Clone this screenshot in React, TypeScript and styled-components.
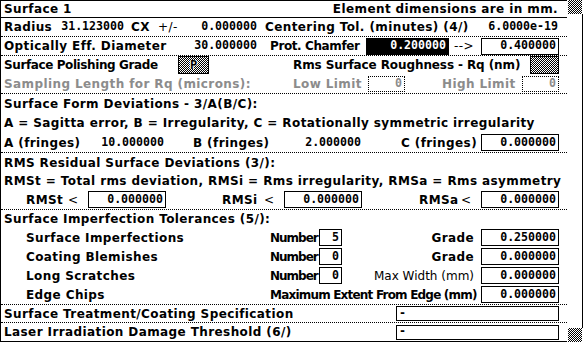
import React from 'react';
import styled, { createGlobalStyle, css } from 'styled-components';

const GlobalStyle = createGlobalStyle`
  * {
    margin: 0;
    padding: 0;
    box-sizing: border-box;
  }
  html, body {
    background: #fff;
  }
  body {
    font-family: 'DejaVu Sans', sans-serif;
    font-weight: bold;
    font-size: 12px;
    letter-spacing: 0.4px;
    color: #000;
  }
`;

// 1px black/white checker, the old X11 "gray" stipple
const stipple = css`
  background-color: #fff;
  background-image: repeating-conic-gradient(#000 0 25%, #fff 0 50%);
  background-size: 2px 2px;
`;

const mono = css`
  font-family: 'DejaVu Sans Mono', monospace;
  font-size: 11.6px;
  letter-spacing: 0;
`;

const Window = styled.div`
  display: flex;
  width: 583px;
  height: 342px;
`;

const Panel = styled.div`
  width: 567px;
  height: 342px;
  flex: none;
  border: 1px solid #000;
  border-right: none;
  display: flex;
  flex-direction: column;
`;

const Section = styled.div<{ $h: number; $solid?: boolean; $last?: boolean }>`
  height: ${p => p.$h}px;
  flex: none;
  display: flex;
  flex-direction: column;
  border-bottom: ${p => (p.$last ? 'none' : p.$solid ? '1px solid #000' : '1px dotted #000')};
`;

const Row = styled.div<{ $h: number }>`
  height: ${p => p.$h}px;
  flex: none;
  display: flex;
  align-items: center;
  padding: 0 8px 0 3px;
  white-space: pre;
  line-height: 1;
`;

const Cell = styled.span<{
  $w?: number;
  $ml?: number;
  $right?: boolean;
  $dim?: boolean;
  $thin?: boolean;
  $pr?: number;
  $ls?: number;
  $auto?: boolean;
}>`
  flex: none;
  width: ${p => (p.$w ? `${p.$w}px` : 'auto')};
  margin-left: ${p => (p.$auto ? 'auto' : `${p.$ml ?? 0}px`)};
  padding-right: ${p => p.$pr ?? 0}px;
  text-align: ${p => (p.$right ? 'right' : 'left')};
  color: ${p => (p.$dim ? '#8c8c8c' : '#000')};
  font-weight: ${p => (p.$thin ? 'normal' : 'bold')};
  ${p => p.$ls !== undefined && `letter-spacing: ${p.$ls}px;`}
`;

const Num = styled(Cell)`
  ${mono};
`;

const Field = styled.span<{ $w: number; $sel?: boolean; $left?: boolean; $h?: number }>`
  flex: none;
  width: ${p => p.$w}px;
  height: ${p => p.$h ?? 17}px;
  border: 1px solid #000;
  background: ${p => (p.$sel ? '#000' : '#fff')};
  color: ${p => (p.$sel ? '#fff' : '#000')};
  ${mono};
  display: flex;
  align-items: center;
  justify-content: ${p => (p.$left ? 'flex-start' : 'flex-end')};
  padding: 0 2px;
`;

const DimField = styled.span<{ $w: number }>`
  flex: none;
  width: ${p => p.$w}px;
  height: 16px;
  border: 1px dotted #000;
  color: #8c8c8c;
  ${mono};
  display: flex;
  align-items: center;
  justify-content: flex-end;
  padding: 0 2px;
`;

const StippleButton = styled.span<{ $w: number }>`
  flex: none;
  width: ${p => p.$w}px;
  height: 18px;
  border: 1px solid #000;
  ${stipple};
  display: flex;
  align-items: center;
  justify-content: center;
  ${mono};
`;

const ButtonLabel = styled.span`
  color: #000;
  font-size: 12px;
  text-shadow: 1px 0 0 #fff, -1px 0 0 #fff;
`;

const ScrollBar = styled.div`
  width: 16px;
  flex: none;
  display: flex;
  flex-direction: column;
`;

const ScrollArrow = styled.div`
  width: 14px;
  height: 14px;
  margin-left: 1px;
  ${stipple};
`;

const Trough = styled.div`
  flex: 1;
  border-right: 1px solid #000;
`;

const Tolerance: React.FC<{ name: string; ml: number; value: string }> = ({ name, ml, value }) => (
  <>
    <Cell $ml={ml} $w={42}>{name}</Cell>
    <Cell $w={20} $thin>&lt;</Cell>
    <Field $w={78}>{value}</Field>
  </>
);

const App: React.FC = () => {
  return (
    <Window>
      <GlobalStyle />
      <Panel>
        <Section $h={17} $solid>
          <Row $h={16}>
            <Cell>Surface 1</Cell>
            <Cell $auto $pr={1}>Element dimensions are in mm.</Cell>
          </Row>
        </Section>

        <Section $h={19}>
          <Row $h={18}>
            <Cell $w={50}>Radius</Cell>
            <Num $w={70} $right>31.123000</Num>
            <Cell $ml={7} $w={27}>CX</Cell>
            <Cell $w={32} $thin>+/-</Cell>
            <Num $w={67} $right>0.000000</Num>
            <Cell $ml={8}>Centering Tol. (minutes) (4/)</Cell>
            <Num $auto $pr={1}>6.0000e-19</Num>
          </Row>
        </Section>

        <Section $h={19}>
          <Row $h={18}>
            <Cell $w={176}>Optically Eff. Diameter</Cell>
            <Num $w={77} $right>30.000000</Num>
            <Cell $ml={13} $w={96} $ls={-0.4}>Prot. Chamfer</Cell>
            <Field $w={83} $sel>0.200000</Field>
            <Cell $ml={5} $w={27} $thin>--&gt;</Cell>
            <Field $w={78}>0.400000</Field>
          </Row>
        </Section>

        <Section $h={38}>
          <Row $h={18}>
            <Cell $w={174} $ls={-0.4}>Surface Polishing Grade</Cell>
            <StippleButton $w={31}><ButtonLabel>P</ButtonLabel></StippleButton>
            <Cell $ml={84} $w={237} $ls={-0.1}>Rms Surface Roughness - Rq (nm)</Cell>
            <StippleButton $w={29} />
          </Row>
          <Row $h={19}>
            <Cell $w={289} $dim>Sampling Length for Rq (microns):</Cell>
            <Cell $w={75} $dim>Low Limit</Cell>
            <DimField $w={37}>0</DimField>
            <Cell $ml={37} $w={80} $dim>High Limit</Cell>
            <DimField $w={37}>0</DimField>
          </Row>
        </Section>

        <Section $h={59}>
          <Row $h={19}>
            <Cell>Surface Form Deviations - 3/A(B/C):</Cell>
          </Row>
          <Row $h={20}>
            <Cell>A = Sagitta error, B = Irregularity, C = Rotationally symmetric irregularity</Cell>
          </Row>
          <Row $h={19}>
            <Cell $w={96}>A (fringes)</Cell>
            <Num $w={64} $right>10.000000</Num>
            <Cell $ml={29} $w={104}>B (fringes)</Cell>
            <Num $w={64} $right>2.000000</Num>
            <Cell $ml={40} $w={80}>C (fringes)</Cell>
            <Field $w={78}>0.000000</Field>
          </Row>
        </Section>

        <Section $h={57}>
          <Row $h={19}>
            <Cell>RMS Residual Surface Deviations (3/):</Cell>
          </Row>
          <Row $h={18}>
            <Cell>RMSt = Total rms deviation, RMSi = Rms irregularity, RMSa = Rms asymmetry</Cell>
          </Row>
          <Row $h={19}>
            <Tolerance name="RMSt" ml={22} value="0.000000" />
            <Tolerance name="RMSi" ml={56} value="0.000000" />
            <Tolerance name="RMSa" ml={57} value="0.000000" />
          </Row>
        </Section>

        <Section $h={95}>
          <Row $h={18}>
            <Cell>Surface Imperfection Tolerances (5/):</Cell>
          </Row>
          <Row $h={19}>
            <Cell $ml={22} $w={244}>Surface Imperfections</Cell>
            <Cell $w={49} $ls={-1}>Number</Cell>
            <Field $w={23}>5</Field>
            <Cell $w={139} $right $pr={7}>Grade</Cell>
            <Field $w={78}>0.250000</Field>
          </Row>
          <Row $h={19}>
            <Cell $ml={22} $w={244}>Coating Blemishes</Cell>
            <Cell $w={49} $ls={-1}>Number</Cell>
            <Field $w={23}>0</Field>
            <Cell $w={139} $right $pr={7}>Grade</Cell>
            <Field $w={78}>0.000000</Field>
          </Row>
          <Row $h={19}>
            <Cell $ml={22} $w={244}>Long Scratches</Cell>
            <Cell $w={49} $ls={-1}>Number</Cell>
            <Field $w={23}>0</Field>
            <Cell $w={139} $right $pr={7} $thin $ls={0}>Max Width (mm)</Cell>
            <Field $w={78}>0.000000</Field>
          </Row>
          <Row $h={19}>
            <Cell $ml={22} $w={244}>Edge Chips</Cell>
            <Cell $w={211} $right $pr={7} $ls={-0.8}>Maximum Extent From Edge (mm)</Cell>
            <Field $w={78}>0.000000</Field>
          </Row>
        </Section>

        <Section $h={18}>
          <Row $h={17}>
            <Cell $w={392}>Surface Treatment/Coating Specification</Cell>
            <Field $w={163} $h={15} $left>-</Field>
          </Row>
        </Section>

        <Section $h={18} $last>
          <Row $h={18}>
            <Cell $w={392}>Laser Irradiation Damage Threshold (6/)</Cell>
            <Field $w={163} $h={15} $left>-</Field>
          </Row>
        </Section>
      </Panel>

      <ScrollBar>
        <ScrollArrow />
        <Trough />
        <ScrollArrow />
      </ScrollBar>
    </Window>
  );
};

export default App;
